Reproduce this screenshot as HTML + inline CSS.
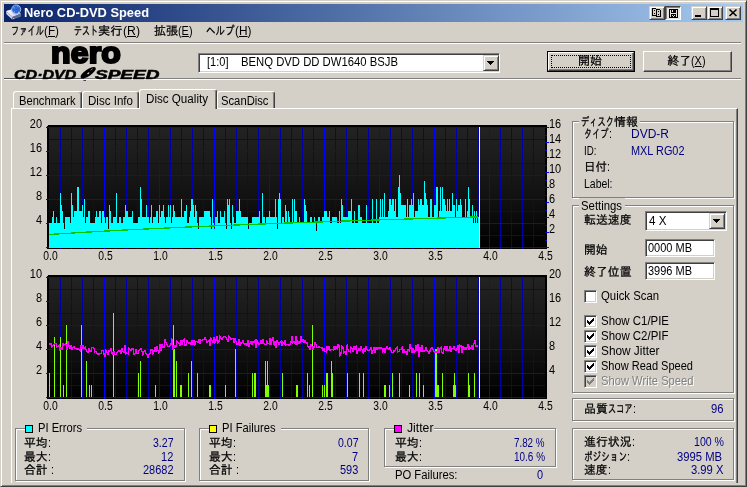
<!DOCTYPE html>
<html lang="ja"><head><meta charset="utf-8"><title>Nero CD-DVD Speed</title>
<style>
html,body{margin:0;padding:0}
body{will-change:transform;width:747px;height:487px;overflow:hidden;position:relative;background:#d4d0c8;font:12px/14px "Liberation Sans","IPAGothic",sans-serif;color:#000}
div,span{box-sizing:border-box}
.a{position:absolute}
.t{position:absolute;white-space:nowrap;line-height:14px;height:14px}
.n{color:#000080}
.k{display:inline-block;height:14px;vertical-align:top;white-space:pre}
.k>i{display:inline-block;font-style:normal;transform-origin:0 0;white-space:pre}
u{text-decoration:underline;text-underline-offset:1px}
.win{left:0;top:0;width:747px;height:487px;border:1px solid;border-color:#d4d0c8 #404040 #404040 #d4d0c8;box-shadow:inset 1px 1px 0 #fff,inset -1px -1px 0 #808080}
.title{left:4px;top:4px;width:739px;height:18px;background:linear-gradient(to right,#0a246a,#a6caf0)}
.tbtn{position:absolute;top:6px;width:16px;height:14px;background:#d4d0c8;border:1px solid;border-color:#d4d0c8 #404040 #404040 #d4d0c8;box-shadow:inset 1px 1px 0 #fff,inset -1px -1px 0 #808080}
.tbtn.p{border-color:#404040 #fff #fff #404040;box-shadow:inset 1px 1px 0 #808080;background:#e9e7e3}
.hl{position:absolute;height:2px;border-top:1px solid #808080;border-bottom:1px solid #fff}
.btn{position:absolute;background:#d4d0c8;border:1px solid;border-color:#fff #404040 #404040 #fff;box-shadow:inset -1px -1px 0 #808080;text-align:center}
.sunk{position:absolute;background:#fff;border:1px solid;border-color:#808080 #fff #fff #808080;box-shadow:inset 1px 1px 0 #404040,inset -1px -1px 0 #d4d0c8}
.dd{position:absolute;width:16px;background:#d4d0c8;border:1px solid;border-color:#d4d0c8 #404040 #404040 #d4d0c8;box-shadow:inset 1px 1px 0 #fff,inset -1px -1px 0 #808080}
.dd:after{content:"";position:absolute;left:6px;top:8px;width:1px;height:1px;background:#000;box-shadow:-1px -1px 0 #000,0 -1px 0 #000,1px -1px 0 #000,-2px -2px 0 #000,-1px -2px 0 #000,0 -2px 0 #000,1px -2px 0 #000,2px -2px 0 #000,-3px -3px 0 #000,-2px -3px 0 #000,-1px -3px 0 #000,0 -3px 0 #000,1px -3px 0 #000,2px -3px 0 #000,3px -3px 0 #000}
.gb{position:absolute;border:1px solid #808080;box-shadow:1px 1px 0 #fff,inset 1px 1px 0 #fff}
.lg{position:absolute;background:#d4d0c8;white-space:nowrap;line-height:14px;height:14px}
.cb{position:absolute;width:13px;height:13px;background:#fff;border:1px solid;border-color:#808080 #fff #fff #808080;box-shadow:inset 1px 1px 0 #404040,inset -1px -1px 0 #d4d0c8}
.cb.d{background:#d4d0c8}
.sq{position:absolute;width:8px;height:8px;border:1px solid #000}
.tab{position:absolute;top:91px;height:17px;background:#d4d0c8;border:1px solid;border-color:#fff #404040 transparent #fff;border-bottom:0;border-radius:3px 3px 0 0;box-shadow:inset -1px 0 0 #808080}
.tab.s{top:89px;height:20px;z-index:3}
.panel{left:11px;top:108px;width:727px;height:375px;border:1px solid;border-color:#fff #404040 #404040 #fff;border-bottom:0;box-shadow:inset -1px 0 0 #808080}
</style></head><body>
<div class="a win"></div>
<div class="a title"></div>
<svg class="a" style="left:5px;top:4px" width="18" height="18" viewBox="0 0 18 18">
<defs><linearGradient id="dt" x1="0" y1="0" x2="1" y2="0"><stop offset="0" stop-color="#fff"/><stop offset="1" stop-color="#b4b4dc"/></linearGradient></defs>
<path d="M1.1,7 L10.5,3.9 L16,9.7 L7.4,12.9Z" fill="url(#dt)"/>
<path d="M1.1,7 L7.4,12.9 L7.4,15.6 L1.5,10.2Z" fill="#d8d8ee"/>
<path d="M7.4,12.9 L16,9.7 L16,12.5 L7.4,15.6Z" fill="#7474ac"/>
<path d="M8,14 L15.6,11.2" stroke="#50508a" stroke-width=".7"/>
<rect x="8" y="14" width="1.2" height="1" fill="#f0d820"/><rect x="13" y="12.4" width="1" height=".9" fill="#30a050"/>
<circle cx="11.2" cy="5.4" r="4.5" fill="#2a6ad8" stroke="#9ccaf8" stroke-width=".9"/>
<path d="M8.6,3.2l1,.8M13,8l.9,.6M9,7.6l.8,.5M12.5,2.2l.7,.4" stroke="#cfe6ff" stroke-width=".9"/>
<path d="M10,5.9 L13.8,3.9 L12.4,6.1Z" fill="#e81818"/>
</svg>

<div class="tbtn" style="left:649px"></div>
<div class="tbtn p" style="left:665px"></div>
<div class="tbtn" style="left:691px"><div class="a" style="left:3px;top:8px;width:6px;height:2px;background:#000"></div></div>
<div class="tbtn" style="left:707px"><div class="a" style="left:2px;top:1px;width:9px;height:9px;border:1px solid #000;border-top-width:2px"></div></div>
<div class="tbtn" style="left:725px"><svg width="14" height="12" viewBox="0 0 14 12" style="position:absolute;left:0;top:0"><path d="M3.5,2.5l7,6.5M10.5,2.5l-7,6.5" stroke="#000" stroke-width="1.6"/></svg></div>

<!-- menu -->




<div class="hl" style="left:4px;top:42px;width:737px"></div>
<div class="hl" style="left:4px;top:78px;width:737px"></div>

<!-- logo -->
<div class="a" style="left:4px;top:78px;width:80px;height:1px;background:#505050"></div>


<svg class="a" style="left:78px;top:64px" width="22" height="18" viewBox="0 0 22 18"><ellipse cx="10.2" cy="8.7" rx="9" ry="3.3" transform="rotate(-34 10.2 8.7)" fill="#000"/><ellipse cx="10.3" cy="9.3" rx="1.3" ry=".7" transform="rotate(-34 10.3 9.3)" fill="#d4d0c8"/><path d="M12.5,6.2l2.2,-1.6" stroke="#b0b0b0" stroke-width=".7"/><path d="M5.5,16.5h2.5" stroke="#404040" stroke-width="1"/></svg>


<!-- drive combo -->
<div class="sunk" style="left:198px;top:53px;width:302px;height:20px"></div>

<div class="dd" style="left:483px;top:55px;height:16px"></div>

<!-- buttons -->
<div class="a" style="left:547px;top:51px;width:88px;height:21px;background:#000"></div>
<div class="btn" style="left:548px;top:52px;width:86px;height:19px"></div>
<div class="a" style="left:551px;top:55px;width:80px;height:13px;border:1px dotted #000"></div>

<div class="btn" style="left:643px;top:51px;width:89px;height:21px"></div>


<!-- tabs -->
<div class="a panel"></div>
<div class="tab" style="left:13px;width:69px"></div>
<div class="tab" style="left:82px;width:57px"></div>
<div class="tab" style="left:217px;width:58px"></div>
<div class="tab s" style="left:139px;width:78px"></div>





<!-- charts -->
<svg class="a" style="left:0;top:0" width="747" height="487" viewBox="0 0 747 487">
<defs><linearGradient id="bg" x1="0" y1="0" x2="0" y2="1"><stop offset="0" stop-color="#232323"/><stop offset=".6" stop-color="#111"/><stop offset="1" stop-color="#000"/></linearGradient></defs>
<g shape-rendering="crispEdges">
<path d="M48,125H547V249H47V126Z" fill="#000"/>
<rect x="49" y="127" width="496" height="121" fill="url(#bg)"/>
<path d="M60.5,127V249M71.5,127V249M82.5,127V249M93.5,127V249M115.5,127V249M126.5,127V249M137.5,127V249M148.5,127V249M170.5,127V249M181.5,127V249M192.5,127V249M203.5,127V249M225.5,127V249M236.5,127V249M247.5,127V249M258.5,127V249M280.5,127V249M291.5,127V249M302.5,127V249M313.5,127V249M335.5,127V249M346.5,127V249M357.5,127V249M368.5,127V249M390.5,127V249M401.5,127V249M412.5,127V249M423.5,127V249M445.5,127V249M456.5,127V249M467.5,127V249M478.5,127V249M500.5,127V249M511.5,127V249M522.5,127V249M533.5,127V249M49,139.5H545M49,163.5H545M49,187.5H545M49,211.5H545M49,235.5H545" stroke="#0000a8" stroke-width="1" fill="none"/>
<path d="M104.5,127V249M159.5,127V249M214.5,127V249M269.5,127V249M324.5,127V249M379.5,127V249M434.5,127V249M489.5,127V249M46,127.5H545M46,151.5H545M46,175.5H545M46,199.5H545M46,223.5H545M46,247.5H545" stroke="#0000ff" stroke-width="1" fill="none"/>
<path d="M545,127.5H549M545,142.5H549M545,157.5H549M545,172.5H549M545,187.5H549M545,202.5H549M545,217.5H549M545,232.5H549M545,247.5H549M545,135.500H547M545,150.500H547M545,165.500H547M545,180.500H547M545,195.500H547M545,210.500H547M545,225.500H547M545,240.500H547" stroke="#0000ff"/>
<path d="M49,248V223 H50V223 H51V223 H52V217 H53V211 H54V223 H55V223 H56V217 H57V223 H58V223 H59V223 H60V193 H61V205 H62V211 H63V223 H64V229 H65V217 H66V217 H67V217 H68V217 H69V217 H70V223 H71V193 H72V205 H73V217 H74V211 H75V211 H76V211 H77V187 H78V187 H79V211 H80V211 H81V211 H82V205 H83V217 H84V199 H85V223 H86V217 H87V217 H88V211 H89V211 H90V223 H91V223 H92V223 H93V223 H94V223 H95V217 H96V211 H97V217 H98V217 H99V211 H100V211 H101V223 H102V211 H103V211 H104V217 H105V223 H106V217 H107V217 H108V229 H109V205 H110V211 H111V223 H112V223 H113V217 H114V217 H115V217 H116V193 H117V223 H118V223 H119V217 H120V217 H121V223 H122V223 H123V217 H124V217 H125V205 H126V211 H127V211 H128V217 H129V217 H130V217 H131V217 H132V211 H133V223 H134V223 H135V223 H136V223 H137V223 H138V217 H139V217 H140V187 H141V199 H142V217 H143V217 H144V217 H145V217 H146V205 H147V217 H148V217 H149V223 H150V217 H151V205 H152V223 H153V217 H154V217 H155V217 H156V211 H157V211 H158V223 H159V205 H160V217 H161V211 H162V211 H163V205 H164V217 H165V223 H166V217 H167V217 H168V205 H169V217 H170V205 H171V223 H172V217 H173V205 H174V211 H175V217 H176V217 H177V217 H178V217 H179V217 H180V217 H181V199 H182V217 H183V217 H184V211 H185V211 H186V205 H187V223 H188V223 H189V217 H190V211 H191V199 H192V199 H193V205 H194V217 H195V205 H196V211 H197V223 H198V229 H199V217 H200V217 H201V217 H202V217 H203V217 H204V211 H205V211 H206V211 H207V211 H208V211 H209V211 H210V217 H211V229 H212V199 H213V223 H214V229 H215V217 H216V217 H217V211 H218V223 H219V223 H220V211 H221V217 H222V217 H223V217 H224V211 H225V223 H226V229 H227V199 H228V205 H229V199 H230V223 H231V229 H232V205 H233V217 H234V223 H235V223 H236V211 H237V211 H238V211 H239V199 H240V211 H241V217 H242V217 H243V217 H244V217 H245V217 H246V217 H247V217 H248V229 H249V223 H250V223 H251V223 H252V217 H253V217 H254V217 H255V217 H256V217 H257V217 H258V217 H259V211 H260V223 H261V223 H262V193 H263V217 H264V217 H265V223 H266V217 H267V217 H268V217 H269V211 H270V217 H271V217 H272V217 H273V217 H274V217 H275V199 H276V217 H277V229 H278V199 H279V193 H280V199 H281V223 H282V217 H283V217 H284V223 H285V205 H286V211 H287V223 H288V211 H289V217 H290V223 H291V223 H292V199 H293V223 H294V199 H295V211 H296V211 H297V223 H298V223 H299V217 H300V223 H301V223 H302V223 H303V223 H304V199 H305V205 H306V211 H307V223 H308V223 H309V223 H310V217 H311V217 H312V223 H313V223 H314V217 H315V223 H316V230.8 H317V223 H318V217 H319V217 H320V223 H321V223 H322V217 H323V217 H324V211 H325V211 H326V211 H327V217 H328V217 H329V211 H330V223 H331V223 H332V217 H333V217 H334V217 H335V217 H336V217 H337V223 H338V223 H339V211 H340V223 H341V199 H342V205 H343V217 H344V217 H345V217 H346V217 H347V217 H348V211 H349V211 H350V211 H351V199 H352V223 H353V223 H354V211 H355V223 H356V223 H357V223 H358V205 H359V205 H360V217 H361V217 H362V223 H363V223 H364V223 H365V223 H366V205 H367V223 H368V223 H369V223 H370V223 H371V223 H372V199 H373V223 H374V223 H375V223 H376V199 H377V223 H378V223 H379V217 H380V199 H381V217 H382V199 H383V217 H384V193 H385V217 H386V217 H387V217 H388V211 H389V199 H390V199 H391V205 H392V199 H393V199 H394V211 H395V199 H396V217 H397V217 H398V187 H399V175 H400V193 H401V205 H402V205 H403V205 H404V205 H405V205 H406V217 H407V199 H408V217 H409V205 H410V205 H411V199 H412V205 H413V193 H414V217 H415V211 H416V211 H417V211 H418V199 H419V205 H420V199 H421V199 H422V205 H423V205 H424V181 H425V193 H426V199 H427V205 H428V217 H429V217 H430V199 H431V199 H432V217 H433V217 H434V205 H435V205 H436V187 H437V187 H438V217 H439V211 H440V187 H441V211 H442V187 H443V199 H444V199 H445V205 H446V211 H447V199 H448V211 H449V199 H450V211 H451V211 H452V193 H453V205 H454V205 H455V217 H456V199 H457V211 H458V205 H459V205 H460V199 H461V205 H462V217 H463V217 H464V217 H465V199 H466V217 H467V211 H468V187 H469V199 H470V217 H471V217 H472V205 H473V223 H474V211 H475V223 H476V211 H477V223 H478V217 H479V248Z" fill="#00ffff"/>
<rect x="479" y="127" width="1" height="121" fill="#f4f4f4"/>
<path d="M48,275H547V399H47V276Z" fill="#000"/>
<rect x="49" y="277" width="496" height="121" fill="url(#bg)"/>
<path d="M60.5,277V399M71.5,277V399M82.5,277V399M93.5,277V399M115.5,277V399M126.5,277V399M137.5,277V399M148.5,277V399M170.5,277V399M181.5,277V399M192.5,277V399M203.5,277V399M225.5,277V399M236.5,277V399M247.5,277V399M258.5,277V399M280.5,277V399M291.5,277V399M302.5,277V399M313.5,277V399M335.5,277V399M346.5,277V399M357.5,277V399M368.5,277V399M390.5,277V399M401.5,277V399M412.5,277V399M423.5,277V399M445.5,277V399M456.5,277V399M467.5,277V399M478.5,277V399M500.5,277V399M511.5,277V399M522.5,277V399M533.5,277V399M49,289.5H545M49,313.5H545M49,337.5H545M49,361.5H545M49,385.5H545" stroke="#0000a8" stroke-width="1" fill="none"/>
<path d="M104.5,277V399M159.5,277V399M214.5,277V399M269.5,277V399M324.5,277V399M379.5,277V399M434.5,277V399M489.5,277V399M46,277.5H545M46,301.5H545M46,325.5H545M46,349.5H545M46,373.5H545M46,397.5H545" stroke="#0000ff" stroke-width="1" fill="none"/>
<path d="M49.5,397V373M54.5,397V337M60.5,397V337M63.5,397V385M66.5,397V325M81.5,397V325M86.5,397V361M89.5,397V385M91.5,397V385M113.5,397V313M138.5,397V373M140.5,397V361M155.5,397V385M173.5,397V325M174.5,397V349M176.5,397V361M180.5,397V385M181.5,397V385M188.5,397V373M191.5,397V361M197.5,397V373M209.5,397V385M210.5,397V385M225.5,397V385M235.5,397V349M252.5,397V373M254.5,397V373M255.5,397V373M265.5,397V361M266.5,397V385M267.5,397V361M268.5,397V385M282.5,397V373M296.5,397V385M297.5,397V385M307.5,397V373M309.5,397V385M312.5,397V325M322.5,397V385M324.5,397V385M326.5,397V373M327.5,397V373M331.5,397V361M332.5,397V373M347.5,397V373M359.5,397V373M363.5,397V373M384.5,397V385M385.5,397V385M389.5,397V385M392.5,397V373M399.5,397V373M409.5,397V385M416.5,397V373M419.5,397V373M423.5,397V385M435.5,397V349M436.5,397V349M437.5,397V385M438.5,397V385M442.5,397V373M453.5,397V385M454.5,397V373M455.5,397V385M468.5,397V373M469.5,397V385M474.5,397V373" stroke="#80ff00" stroke-width="1" fill="none"/>
<rect x="479" y="277" width="1" height="121" fill="#f4f4f4"/>
</g>
<polyline points="49,234.6 52,234.3 55,234.1 58,233.9 61,233.7 64,233.5 67,233.3 70,233.2 73,233.0 76,232.8 79,232.6 82,232.4 85,232.2 88,232.1 91,231.9 94,231.7 97,231.5 100,231.4 103,231.2 106,231.0 109,230.9 112,230.7 115,230.6 118,230.4 121,230.2 124,230.1 127,229.9 130,229.8 133,229.6 136,229.5 139,229.3 142,229.2 145,229.0 148,228.9 151,228.7 154,228.6 157,228.5 160,228.3 163,228.2 166,228.0 169,227.9 172,227.8 175,227.6 178,227.5 181,227.4 184,227.2 187,227.1 190,227.0 193,226.8 196,226.7 199,226.6 202,226.4 205,226.3 208,226.2 211,226.1 214,225.9 217,225.8 220,225.7 223,225.6 226,225.4 229,225.3 232,225.2 235,225.1 238,225.0 241,224.8 244,224.7 247,224.6 250,224.5 253,224.4 256,224.3 259,224.1 262,224.0 265,223.9 268,223.8 271,223.7 274,223.6 277,223.5 280,223.4 283,223.2 286,223.1 289,223.0 292,222.9 295,222.8 298,222.7 301,222.6 304,222.5 307,222.4 310,222.3 313,222.2 316,222.1 319,222.0 322,221.9 325,221.7 328,221.6 331,221.5 334,221.4 337,221.3 340,221.2 343,221.1 346,221.0 349,220.9 352,220.8 355,220.7 358,220.6 361,220.5 364,220.4 367,220.3 370,220.2 373,220.1 376,220.0 379,219.9 382,219.8 385,219.7 388,219.7 391,219.6 394,219.5 397,219.4 400,219.3 403,219.2 406,219.1 409,219.0 412,218.9 415,218.8 418,218.7 421,218.6 424,218.5 427,218.4 430,218.3 433,218.3 436,218.2 439,218.1 442,218.0 445,217.9 448,217.8 451,217.7 454,217.6 457,217.5 460,217.4 463,217.4 466,217.3 469,217.2 472,217.1 475,217.0 478,216.9" fill="none" stroke="#00c800" stroke-width="1.3" shape-rendering="crispEdges"/>
<polyline points="49,343.5 50,344.3 51,343.5 52,346.8 53,345.9 54,344.5 55,343.8 56,343.6 57,346.8 58,346.3 59,345.1 60,349.9 61,347.8 62,349.4 63,343.8 64,345.0 65,344.0 66,344.2 67,349.5 68,340.8 69,346.6 70,348.5 71,344.7 72,349.1 73,347.6 74,346.8 75,348.4 76,348.3 77,349.1 78,348.5 79,349.3 80,350.8 81,344.9 82,348.0 83,345.7 84,348.3 85,347.1 86,349.7 87,351.4 88,352.0 89,348.7 90,350.9 91,351.0 92,347.5 93,347.5 94,348.7 95,351.9 96,351.2 97,353.8 98,353.9 99,354.5 100,354.0 101,353.2 102,350.8 103,350.6 104,353.8 105,356.7 106,350.7 107,352.0 108,354.6 109,351.0 110,350.4 111,348.5 112,353.1 113,354.4 114,352.0 115,354.3 116,354.6 117,352.1 118,351.3 119,350.4 120,350.7 121,354.3 122,348.1 123,351.5 124,352.2 125,345.1 126,353.5 127,353.0 128,353.9 129,348.6 130,349.4 131,350.2 132,348.3 133,348.6 134,354.1 135,353.6 136,349.1 137,353.6 138,353.4 139,350.7 140,349.1 141,348.2 142,351.2 143,354.8 144,351.8 145,350.9 146,353.3 147,354.2 148,357.3 149,354.2 150,353.7 151,350.1 152,350.1 153,353.7 154,351.1 155,347.5 156,351.9 157,345.7 158,350.4 159,353.4 160,344.5 161,351.4 162,344.3 163,347.4 164,347.5 165,339.3 166,342.9 167,344.7 168,346.6 169,346.7 170,345.9 171,344.5 172,338.6 173,350.1 174,345.6 175,347.0 176,346.5 177,341.5 178,342.9 179,343.2 180,345.4 181,340.1 182,345.1 183,341.0 184,339.5 185,345.2 186,345.2 187,339.8 188,342.8 189,343.0 190,342.6 191,344.2 192,341.0 193,344.3 194,340.5 195,344.7 196,341.4 197,341.7 198,342.5 199,340.0 200,342.9 201,340.1 202,340.8 203,339.1 204,339.9 205,337.5 206,339.8 207,342.1 208,341.9 209,340.5 210,345.7 211,338.1 212,340.3 213,342.5 214,337.2 215,342.8 216,339.9 217,336.2 218,342.5 219,341.2 220,336.4 221,338.5 222,339.4 223,337.3 224,336.9 225,336.3 226,337.6 227,339.6 228,341.0 229,336.3 230,337.7 231,339.5 232,338.6 233,338.6 234,342.3 235,338.8 236,341.1 237,344.4 238,344.0 239,339.3 240,345.2 241,342.7 242,342.9 243,340.8 244,343.6 245,344.9 246,343.7 247,345.4 248,340.3 249,347.3 250,343.4 251,341.6 252,344.4 253,341.3 254,342.7 255,340.9 256,348.3 257,340.8 258,343.0 259,344.6 260,343.8 261,340.7 262,343.0 263,338.8 264,343.7 265,344.3 266,344.4 267,341.2 268,343.6 269,343.9 270,338.3 271,345.0 272,339.8 273,337.2 274,345.4 275,341.0 276,347.9 277,340.3 278,342.9 279,344.5 280,342.4 281,341.3 282,345.3 283,342.2 284,343.9 285,340.8 286,345.0 287,344.1 288,344.9 289,345.4 290,344.8 291,342.5 292,336.5 293,342.7 294,341.3 295,343.2 296,335.8 297,345.1 298,341.1 299,343.4 300,342.1 301,335.9 302,341.2 303,339.6 304,342.1 305,340.1 306,342.2 307,342.9 308,346.2 309,346.9 310,349.3 311,344.7 312,346.0 313,349.2 314,347.5 315,342.6 316,344.3 317,347.2 318,347.6 319,346.4 320,347.7 321,347.6 322,347.9 323,350.5 324,348.9 325,351.3 326,351.8 327,346.1 328,349.7 329,347.0 330,350.6 331,349.6 332,349.6 333,349.9 334,347.1 335,349.8 336,346.4 337,348.8 338,344.8 339,345.6 340,355.1 341,353.7 342,346.4 343,347.9 344,352.8 345,351.4 346,355.3 347,344.6 348,349.9 349,351.3 350,351.9 351,347.2 352,348.9 353,351.0 354,346.7 355,349.0 356,346.8 357,353.6 358,350.7 359,348.9 360,350.6 361,346.9 362,349.4 363,352.7 364,348.5 365,351.0 366,346.7 367,349.2 368,350.4 369,350.7 370,349.2 371,347.9 372,353.2 373,350.4 374,347.9 375,353.0 376,347.9 377,349.5 378,347.7 379,348.8 380,347.4 381,348.0 382,348.4 383,351.8 384,348.9 385,352.0 386,348.4 387,346.7 388,348.3 389,349.6 390,347.6 391,350.3 392,352.2 393,352.2 394,351.0 395,350.8 396,348.9 397,347.4 398,351.9 399,351.2 400,349.8 401,349.6 402,347.4 403,352.9 404,349.6 405,352.6 406,351.3 407,354.6 408,349.8 409,350.5 410,343.9 411,347.4 412,352.9 413,348.4 414,352.3 415,351.1 416,345.1 417,350.9 418,344.4 419,356.7 420,347.3 421,351.5 422,344.9 423,351.0 424,351.0 425,350.6 426,347.5 427,350.4 428,351.8 429,353.0 430,351.0 431,348.4 432,347.4 433,349.8 434,351.4 435,352.7 436,351.3 437,352.3 438,347.6 439,352.5 440,348.3 441,347.5 442,352.5 443,353.5 444,348.8 445,346.7 446,350.7 447,346.1 448,350.6 449,350.6 450,345.7 451,351.0 452,348.9 453,348.3 454,346.3 455,349.4 456,350.9 457,349.2 458,345.3 459,352.8 460,345.1 461,345.7 462,352.8 463,346.3 464,349.6 465,347.2 466,349.6 467,347.9 468,344.5 469,350.2 470,347.2 471,348.7 472,345.1 473,349.6 474,343.2 475,340.8 476,346.2 477,345.3 478,346.4" fill="none" stroke="#ff00ff" stroke-width="1.4" shape-rendering="crispEdges"/>
<g font-family="'Liberation Sans','IPAGothic',sans-serif" font-size="12" fill="#000">
<g text-anchor="end"><text x="42" y="128" textLength="12.2" lengthAdjust="spacingAndGlyphs">20</text><text x="42" y="152" textLength="12.2" lengthAdjust="spacingAndGlyphs">16</text><text x="42" y="176" textLength="12.2" lengthAdjust="spacingAndGlyphs">12</text><text x="42" y="200" textLength="6.1" lengthAdjust="spacingAndGlyphs">8</text><text x="42" y="224" textLength="6.1" lengthAdjust="spacingAndGlyphs">4</text>
<text x="42" y="278" textLength="12.2" lengthAdjust="spacingAndGlyphs">10</text><text x="42" y="302" textLength="6.1" lengthAdjust="spacingAndGlyphs">8</text><text x="42" y="326" textLength="6.1" lengthAdjust="spacingAndGlyphs">6</text><text x="42" y="350" textLength="6.1" lengthAdjust="spacingAndGlyphs">4</text><text x="42" y="374" textLength="6.1" lengthAdjust="spacingAndGlyphs">2</text></g>
<g text-anchor="start"><text x="549" y="128" textLength="12.2" lengthAdjust="spacingAndGlyphs">16</text><text x="549" y="143" textLength="12.2" lengthAdjust="spacingAndGlyphs">14</text><text x="549" y="158" textLength="12.2" lengthAdjust="spacingAndGlyphs">12</text><text x="549" y="173" textLength="12.2" lengthAdjust="spacingAndGlyphs">10</text><text x="549" y="188" textLength="6.1" lengthAdjust="spacingAndGlyphs">8</text><text x="549" y="203" textLength="6.1" lengthAdjust="spacingAndGlyphs">6</text><text x="549" y="218" textLength="6.1" lengthAdjust="spacingAndGlyphs">4</text><text x="549" y="233" textLength="6.1" lengthAdjust="spacingAndGlyphs">2</text>
<text x="549" y="278" textLength="12.2" lengthAdjust="spacingAndGlyphs">20</text><text x="549" y="302" textLength="12.2" lengthAdjust="spacingAndGlyphs">16</text><text x="549" y="326" textLength="12.2" lengthAdjust="spacingAndGlyphs">12</text><text x="549" y="350" textLength="6.1" lengthAdjust="spacingAndGlyphs">8</text><text x="549" y="374" textLength="6.1" lengthAdjust="spacingAndGlyphs">4</text></g>
<g text-anchor="middle"><text x="50.500" y="260" textLength="14.4" lengthAdjust="spacingAndGlyphs">0.0</text><text x="105.500" y="260" textLength="14.4" lengthAdjust="spacingAndGlyphs">0.5</text><text x="160.500" y="260" textLength="14.4" lengthAdjust="spacingAndGlyphs">1.0</text><text x="215.500" y="260" textLength="14.4" lengthAdjust="spacingAndGlyphs">1.5</text><text x="270.500" y="260" textLength="14.4" lengthAdjust="spacingAndGlyphs">2.0</text><text x="325.500" y="260" textLength="14.4" lengthAdjust="spacingAndGlyphs">2.5</text><text x="380.500" y="260" textLength="14.4" lengthAdjust="spacingAndGlyphs">3.0</text><text x="435.500" y="260" textLength="14.4" lengthAdjust="spacingAndGlyphs">3.5</text><text x="490.500" y="260" textLength="14.4" lengthAdjust="spacingAndGlyphs">4.0</text><text x="545.500" y="260" textLength="14.4" lengthAdjust="spacingAndGlyphs">4.5</text>
<text x="50.500" y="410" textLength="14.4" lengthAdjust="spacingAndGlyphs">0.0</text><text x="105.500" y="410" textLength="14.4" lengthAdjust="spacingAndGlyphs">0.5</text><text x="160.500" y="410" textLength="14.4" lengthAdjust="spacingAndGlyphs">1.0</text><text x="215.500" y="410" textLength="14.4" lengthAdjust="spacingAndGlyphs">1.5</text><text x="270.500" y="410" textLength="14.4" lengthAdjust="spacingAndGlyphs">2.0</text><text x="325.500" y="410" textLength="14.4" lengthAdjust="spacingAndGlyphs">2.5</text><text x="380.500" y="410" textLength="14.4" lengthAdjust="spacingAndGlyphs">3.0</text><text x="435.500" y="410" textLength="14.4" lengthAdjust="spacingAndGlyphs">3.5</text><text x="490.500" y="410" textLength="14.4" lengthAdjust="spacingAndGlyphs">4.0</text><text x="545.500" y="410" textLength="14.4" lengthAdjust="spacingAndGlyphs">4.5</text></g>
</g>
</svg>

<!-- disc info -->
<div class="gb" style="left:572px;top:121px;width:162px;height:77px"></div>
<span class="lg" style="left:579px;top:114px;width:61px"></span>






<!-- settings -->
<div class="gb" style="left:572px;top:205px;width:162px;height:188px"></div>
<span class="lg" style="left:579px;top:198px;width:46px"></span>


<div class="sunk" style="left:645px;top:211px;width:82px;height:20px"></div>

<div class="dd" style="left:709px;top:213px;height:16px"></div>

<div class="sunk" style="left:645px;top:239px;width:70px;height:18px"></div>


<div class="sunk" style="left:645px;top:262px;width:70px;height:18px"></div>


<div class="cb" style="left:584px;top:290px"></div>
<div class="cb" style="left:584px;top:315px"></div>
<div class="cb" style="left:584px;top:330px"></div>
<div class="cb" style="left:584px;top:345px"></div>
<div class="cb" style="left:584px;top:360px"></div>
<div class="cb d" style="left:584px;top:375px"></div>
<svg class="a" style="left:0;top:0" width="747" height="487" viewBox="0 0 747 487" shape-rendering="crispEdges"><g fill="none" stroke="#000"><path d="M652.500,8.500h3l1,1v6h-4z" fill="#d4d0c8"/><path d="M656.500,9.500h3l1,1v6h-4z" fill="#d4d0c8"/></g><path d="M654,10h1v1h-1zM654,13h1v1h-1zM658,11h1v1h-1zM658,14h1v1h-1z" fill="#000"/>
<path d="M669,9h9v9h-9z" fill="#000"/><path d="M670,10h1v7h-1zM676,10h1v7h-1zM671,13h5v1h-5zM672,10h1v2h-1zM672,15h1v1h-1zM673,16h1v1h-1zM674,15h1v1h-1z" fill="#e4e2dc"/><path d="M587,320h1v3h-1zM588,321h1v3h-1zM589,322h1v3h-1zM590,321h1v3h-1zM591,320h1v3h-1zM592,319h1v3h-1zM593,318h1v3h-1zM587,335h1v3h-1zM588,336h1v3h-1zM589,337h1v3h-1zM590,336h1v3h-1zM591,335h1v3h-1zM592,334h1v3h-1zM593,333h1v3h-1zM587,350h1v3h-1zM588,351h1v3h-1zM589,352h1v3h-1zM590,351h1v3h-1zM591,350h1v3h-1zM592,349h1v3h-1zM593,348h1v3h-1zM587,365h1v3h-1zM588,366h1v3h-1zM589,367h1v3h-1zM590,366h1v3h-1zM591,365h1v3h-1zM592,364h1v3h-1zM593,363h1v3h-1z" fill="#000"/><path d="M587,380h1v3h-1zM588,381h1v3h-1zM589,382h1v3h-1zM590,381h1v3h-1zM591,380h1v3h-1zM592,379h1v3h-1zM593,378h1v3h-1z" fill="#808080"/></svg>

<!-- quality -->
<div class="gb" style="left:572px;top:398px;width:162px;height:23px"></div>

<!-- progress -->
<div class="gb" style="left:572px;top:428px;width:162px;height:52px"></div>




<!-- PI errors -->
<div class="gb" style="left:15px;top:428px;width:170px;height:53px"></div>
<span class="lg" style="left:25px;top:421px;width:62px"></span>
<div class="sq" style="left:25px;top:425px;background:#00ffff"></div>




<!-- PI failures -->
<div class="gb" style="left:199px;top:428px;width:170px;height:53px"></div>
<span class="lg" style="left:209px;top:421px;width:72px"></span>
<div class="sq" style="left:209px;top:425px;background:#ffff00"></div>




<!-- jitter -->
<div class="gb" style="left:384px;top:428px;width:172px;height:39px"></div>
<span class="lg" style="left:394px;top:421px;width:40px"></span>
<div class="sq" style="left:394px;top:425px;background:#ff00ff"></div>




<span id="nero" class="t" style="left:50.5px;top:37.5px;height:30px;line-height:30px;font-size:30px;font-weight:bold;letter-spacing:0.2px;transform-origin:0 0;transform:scaleX(1.065);-webkit-text-stroke:2.2px #000">nero</span>
<span id="cdd" class="t" style="left:13.5px;top:67.5px;font-size:12px;font-weight:bold;font-style:italic;transform-origin:0 50%;transform:scaleX(1.335);-webkit-text-stroke:.5px #000">CD·DVD</span>
<span id="spd" class="t" style="left:95px;top:67.5px;font-size:12px;font-weight:bold;font-style:italic;transform-origin:0 50%;transform:scaleX(1.585);-webkit-text-stroke:.5px #000">SPEED</span>
<span id="ttl" class="t" style="left:24px;top:6px;color:#fff;font-weight:bold"><span class="k" style="width:125px"><i style="transform:scaleX(1.0712)">Nero CD-DVD Speed</i></span></span>
<span id="m1" class="t" style="left:11px;top:24px;"><span class="k" style="width:33px"><i style="transform:scaleX(0.6875);-webkit-text-stroke:.3px">ファイル</i></span><span class="k" style="width:15px"><i style="transform:scaleX(0.9776)">(<u>F</u>)</i></span></span>
<span id="m2" class="t" style="left:74px;top:24px;"><span class="k" style="width:24px"><i style="transform:scaleX(0.6667);-webkit-text-stroke:.3px">テスト</i></span><span class="k" style="width:24.5px"><i style="transform:scaleX(1.0208);-webkit-text-stroke:.25px">実行</i></span><span class="k" style="width:17px"><i style="transform:scaleX(1.0197)">(<u>R</u>)</i></span></span>
<span id="m3" class="t" style="left:154px;top:24px;"><span class="k" style="width:24px"><i style="-webkit-text-stroke:.25px">拡張</i></span><span class="k" style="width:14.5px"><i style="transform:scaleX(0.9054)">(<u>E</u>)</i></span></span>
<span id="m4" class="t" style="left:206px;top:24px;"><span class="k" style="width:28.5px"><i style="transform:scaleX(0.7917);-webkit-text-stroke:.3px">ヘルプ</i></span><span class="k" style="width:16.5px"><i style="transform:scaleX(0.9897)">(<u>H</u>)</i></span></span>
<span id="drv" class="t" style="left:207px;top:55px;"><span class="k" style="width:21.5px"><i style="transform:scaleX(0.9204)">[1:0]</i></span><span class="k" style="width:12.5px"><i style="transform:scaleX(1.2480)">   </i></span><span class="k" style="width:157px"><i style="transform:scaleX(0.9417)">BENQ DVD DD DW1640 BSJB</i></span></span>
<span id="b1" class="t" style="left:546px;width:88px;text-align:center;top:54px;"><span class="k" style="width:24px"><i style="-webkit-text-stroke:.25px">開始</i></span></span>
<span id="b2" class="t" style="left:642px;width:89px;text-align:center;top:54px;"><span class="k" style="width:24px"><i style="-webkit-text-stroke:.25px">終了</i></span><span class="k" style="width:14.5px"><i style="transform:scaleX(0.9054)">(<u>X</u>)</i></span></span>
<span id="t1" class="t" style="left:19px;top:94px;z-index:4"><span class="k" style="width:56.5px"><i style="transform:scaleX(0.9308)">Benchmark</i></span></span>
<span id="t2" class="t" style="left:88px;top:94px;z-index:4"><span class="k" style="width:45px"><i style="transform:scaleX(0.9639)">Disc Info</i></span></span>
<span id="t3" class="t" style="left:146px;top:92px;z-index:4"><span class="k" style="width:62px"><i style="transform:scaleX(0.9685)">Disc Quality</i></span></span>
<span id="t4" class="t" style="left:221px;top:94px;z-index:4"><span class="k" style="width:47.5px"><i style="transform:scaleX(0.9371)">ScanDisc</i></span></span>
<span id="l1" class="t" style="left:581px;top:115px;"><span class="k" style="width:33px"><i style="transform:scaleX(0.6875);-webkit-text-stroke:.3px">ディスク</i></span><span class="k" style="width:24px"><i style="-webkit-text-stroke:.25px">情報</i></span></span>
<span id="d1" class="t" style="left:584px;top:127px;"><span class="k" style="width:24.5px"><i style="transform:scaleX(0.6806);-webkit-text-stroke:.3px">タイプ</i></span><span class="k" style="width:3px"><i style="transform:scaleX(0.8972)">:</i></span></span>
<span id="d1v" class="t n" style="left:631px;top:127px;"><span class="k" style="width:38px"><i>DVD-R</i></span></span>
<span id="d2" class="t" style="left:584px;top:144px;"><span class="k" style="width:12.5px"><i style="transform:scaleX(0.8147)">ID:</i></span></span>
<span id="d2v" class="t n" style="left:631px;top:144px;"><span class="k" style="width:53.5px"><i style="transform:scaleX(0.9080)">MXL RG02</i></span></span>
<span id="d3" class="t" style="left:584px;top:160px;"><span class="k" style="width:23px"><i style="transform:scaleX(0.9583);-webkit-text-stroke:.25px">日付</i></span><span class="k" style="width:3px"><i style="transform:scaleX(0.8972)">:</i></span></span>
<span id="d4" class="t" style="left:584px;top:177px;"><span class="k" style="width:28.5px"><i style="transform:scaleX(0.8715)">Label:</i></span></span>
<span id="l2" class="t" style="left:581px;top:199px;"><span class="k" style="width:41px"><i style="transform:scaleX(0.9456)">Settings</i></span></span>
<span id="s1" class="t" style="left:584px;top:213px;"><span class="k" style="width:47.5px"><i style="transform:scaleX(0.9896);-webkit-text-stroke:.25px">転送速度</i></span></span>
<span id="s1v" class="t" style="left:649px;top:214px;"><span class="k" style="width:17.5px"><i style="transform:scaleX(0.9714)">4 X</i></span></span>
<span id="s2" class="t" style="left:584px;top:243px;"><span class="k" style="width:23.5px"><i style="transform:scaleX(0.9792);-webkit-text-stroke:.25px">開始</i></span></span>
<span id="s2v" class="t" style="left:648px;top:241px;"><span class="k" style="width:44px"><i style="transform:scaleX(0.9161)">0000 MB</i></span></span>
<span id="s3" class="t" style="left:584px;top:265px;"><span class="k" style="width:47.5px"><i style="transform:scaleX(0.9896);-webkit-text-stroke:.25px">終了位置</i></span></span>
<span id="s3v" class="t" style="left:648px;top:264px;"><span class="k" style="width:44px"><i style="transform:scaleX(0.9161)">3996 MB</i></span></span>
<span id="c0" class="t" style="left:601px;top:289px;"><span class="k" style="width:58px"><i style="transform:scaleX(0.9453)">Quick Scan</i></span></span>
<span id="c1" class="t" style="left:601px;top:314px;"><span class="k" style="width:68px"><i style="transform:scaleX(0.9527)">Show C1/PIE</i></span></span>
<span id="c2" class="t" style="left:601px;top:329px;"><span class="k" style="width:67.5px"><i style="transform:scaleX(0.9547)">Show C2/PIF</i></span></span>
<span id="c3" class="t" style="left:601px;top:344px;"><span class="k" style="width:58.5px"><i style="transform:scaleX(0.9855)">Show Jitter</i></span></span>
<span id="c4" class="t" style="left:601px;top:359px;"><span class="k" style="width:92px"><i style="transform:scaleX(0.9193)">Show Read Speed</i></span></span>
<span id="c5" class="t" style="left:601px;top:374px;color:#808080;text-shadow:1px 1px 0 #fff"><span class="k" style="width:92.5px"><i style="transform:scaleX(0.9327)">Show Write Speed</i></span></span>
<span id="q1" class="t" style="left:584px;top:402px;"><span class="k" style="width:24px"><i style="-webkit-text-stroke:.25px">品質</i></span><span class="k" style="width:24.5px"><i style="transform:scaleX(0.6806);-webkit-text-stroke:.3px">スコア</i></span><span class="k" style="width:3px"><i style="transform:scaleX(0.8972)">:</i></span></span>
<span id="q1v" class="t n" style="right:23.5px;top:402px;"><span class="k" style="width:12.5px"><i style="transform:scaleX(0.9357)">96</i></span></span>
<span id="p1" class="t" style="left:584px;top:435px;"><span class="k" style="width:47.5px"><i style="transform:scaleX(0.9896);-webkit-text-stroke:.25px">進行状況</i></span><span class="k" style="width:3px"><i style="transform:scaleX(0.8972)">:</i></span></span>
<span id="p1v" class="t n" style="right:23.5px;top:435px;"><span class="k" style="width:30px"><i style="transform:scaleX(0.8815)">100 %</i></span></span>
<span id="p2" class="t" style="left:584px;top:450px;"><span class="k" style="width:43px"><i style="transform:scaleX(0.7167);-webkit-text-stroke:.3px">ポジション</i></span><span class="k" style="width:3px"><i style="transform:scaleX(0.8972)">:</i></span></span>
<span id="p2v" class="t n" style="right:25px;top:450px;"><span class="k" style="width:45px"><i style="transform:scaleX(0.9369)">3995 MB</i></span></span>
<span id="p3" class="t" style="left:584px;top:463px;"><span class="k" style="width:23.5px"><i style="transform:scaleX(0.9792);-webkit-text-stroke:.25px">速度</i></span><span class="k" style="width:3px"><i style="transform:scaleX(0.8972)">:</i></span></span>
<span id="p3v" class="t n" style="right:23.5px;top:463px;"><span class="k" style="width:32.5px"><i style="transform:scaleX(0.9365)">3.99 X</i></span></span>
<span id="e0" class="t" style="left:38px;top:421px;"><span class="k" style="width:44px"><i style="transform:scaleX(0.9294)">PI Errors</i></span></span>
<span id="e1" class="t" style="left:24px;top:436px;"><span class="k" style="width:23.5px"><i style="transform:scaleX(0.9792);-webkit-text-stroke:.25px">平均</i></span><span class="k" style="width:3px"><i style="transform:scaleX(0.8972)">:</i></span></span>
<span id="e1v" class="t n" style="right:574px;top:436px;"><span class="k" style="width:20.5px"><i style="transform:scaleX(0.8776)">3.27</i></span></span>
<span id="e2" class="t" style="left:24px;top:450px;"><span class="k" style="width:23.5px"><i style="transform:scaleX(0.9792);-webkit-text-stroke:.25px">最大</i></span><span class="k" style="width:3px"><i style="transform:scaleX(0.8972)">:</i></span></span>
<span id="e2v" class="t n" style="right:574px;top:450px;"><span class="k" style="width:12.3px"><i style="transform:scaleX(0.9207)">12</i></span></span>
<span id="e3" class="t" style="left:24px;top:463px;"><span class="k" style="width:23.5px"><i style="transform:scaleX(0.9792);-webkit-text-stroke:.25px">合計</i></span><span class="k" style="width:6px"><i style="transform:scaleX(0.8993)"> :</i></span></span>
<span id="e3v" class="t n" style="right:574px;top:463px;"><span class="k" style="width:30.5px"><i style="transform:scaleX(0.9139)">28682</i></span></span>
<span id="f0" class="t" style="left:222px;top:421px;"><span class="k" style="width:53.5px"><i style="transform:scaleX(0.9327)">PI Failures</i></span></span>
<span id="f1" class="t" style="left:209px;top:436px;"><span class="k" style="width:23.5px"><i style="transform:scaleX(0.9792);-webkit-text-stroke:.25px">平均</i></span><span class="k" style="width:3px"><i style="transform:scaleX(0.8972)">:</i></span></span>
<span id="f1v" class="t n" style="right:389px;top:436px;"><span class="k" style="width:20.5px"><i style="transform:scaleX(0.8776)">0.07</i></span></span>
<span id="f2" class="t" style="left:209px;top:450px;"><span class="k" style="width:23.5px"><i style="transform:scaleX(0.9792);-webkit-text-stroke:.25px">最大</i></span><span class="k" style="width:3px"><i style="transform:scaleX(0.8972)">:</i></span></span>
<span id="f2v" class="t n" style="right:389px;top:450px;"><span class="k" style="width:6.1px"><i style="transform:scaleX(0.9121)">7</i></span></span>
<span id="f3" class="t" style="left:209px;top:463px;"><span class="k" style="width:23.5px"><i style="transform:scaleX(0.9792);-webkit-text-stroke:.25px">合計</i></span><span class="k" style="width:6px"><i style="transform:scaleX(0.8993)"> :</i></span></span>
<span id="f3v" class="t n" style="right:389px;top:463px;"><span class="k" style="width:18.3px"><i style="transform:scaleX(0.9136)">593</i></span></span>
<span id="g0" class="t" style="left:407px;top:421px;"><span class="k" style="width:26.5px"><i style="transform:scaleX(1.0186)">Jitter</i></span></span>
<span id="g1" class="t" style="left:395px;top:436px;"><span class="k" style="width:23.5px"><i style="transform:scaleX(0.9792);-webkit-text-stroke:.25px">平均</i></span><span class="k" style="width:3px"><i style="transform:scaleX(0.8972)">:</i></span></span>
<span id="g1v" class="t n" style="right:202.5px;top:436px;"><span class="k" style="width:30.5px"><i style="transform:scaleX(0.8164)">7.82 %</i></span></span>
<span id="g2" class="t" style="left:395px;top:450px;"><span class="k" style="width:23.5px"><i style="transform:scaleX(0.9792);-webkit-text-stroke:.25px">最大</i></span><span class="k" style="width:3px"><i style="transform:scaleX(0.8972)">:</i></span></span>
<span id="g2v" class="t n" style="right:202.5px;top:450px;"><span class="k" style="width:31px"><i style="transform:scaleX(0.8298)">10.6 %</i></span></span>
<span id="h1" class="t" style="left:395px;top:468px;"><span class="k" style="width:62.5px"><i style="transform:scaleX(0.9372)">PO Failures:</i></span></span>
<span id="h1v" class="t n" style="right:204px;top:468px;"><span class="k" style="width:6.1px"><i style="transform:scaleX(0.9121)">0</i></span></span>
</body></html>
